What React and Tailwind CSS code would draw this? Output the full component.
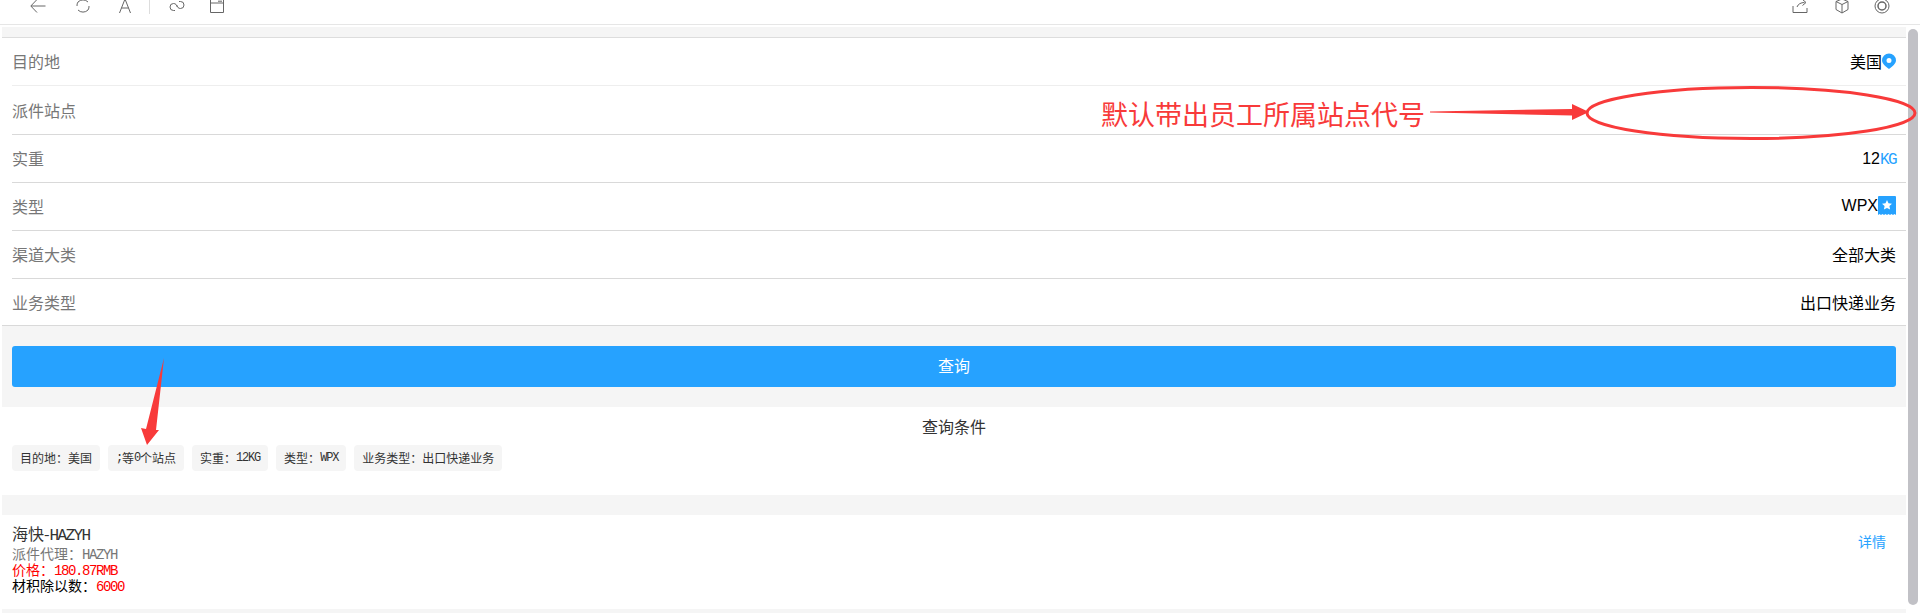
const CJK = 'font-["Noto_Sans_CJK_SC","Liberation_Sans",sans-serif]'

function Mono({ children }) {
  return <span className='font-["Liberation_Mono",monospace] tracking-[-0.1em] leading-none'>{children}</span>
}

function Arial({ children }) {
  return <span className='font-["Liberation_Sans",sans-serif]'>{children}</span>
}

function ToolIcon({ d, className = '' }) {
  return (
    <svg viewBox="0 0 16 16" fill="none" stroke="#666" strokeWidth="1" className={`w-4 h-4 ${className}`}>
      <path d={d} />
    </svg>
  )
}

function PinIcon() {
  return (
    <svg viewBox="0 0 14 16" className="w-[14px] h-4">
      <path fillRule="evenodd" fill="#26a2ff" d="M7 0.500a7 7 0 0 1 7 7c0 3-3.500 6-7 8.500-3.500-2.500-7-5.500-7-8.500a7 7 0 0 1 7-7zM7 5a2.500 2.500 0 1 0 0 5 2.500 2.500 0 0 0 0-5z" />
    </svg>
  )
}

function StarTag() {
  return (
    <svg viewBox="0 0 18 20" className="w-[18px] h-5">
      <path fill="#26a2ff" d="M1 0h16a1 1 0 0 1 1 1v18l-1.500-1-1.500 1-1.500-1-1.500 1-1.500-1-1.500 1-1.500-1-1.500 1-1.500-1-1.500 1-1.500-1-1.500 1V1a1 1 0 0 1 1-1z" />
      <path fill="#fff" d="M9 4l1.500 3.300 3.500 0.400-2.600 2.400 0.700 3.500L9 11.900l-3.100 1.700 0.700-3.500L4 7.700l3.500-0.400z" />
    </svg>
  )
}

function Row({ label, light, tall, last, children }) {
  return (
    <div className={`${tall ? 'h-[49px]' : last ? 'h-[47px] pl-[10px]' : 'h-12 ml-[10px]'} flex items-center justify-between pr-[10px] pb-px border-b ${light ? 'border-[#eeeeee]' : 'border-[#d9d9d9]'} ${tall ? 'ml-[10px]' : ''}`}>
      <span className="text-base text-[#777]">{label}</span>
      <span className="flex items-center text-base text-black">{children}</span>
    </div>
  )
}

function Chip({ children }) {
  return <span className="h-[26px] px-2 flex items-center rounded-[4px] bg-[#f5f5f5] text-xs text-[#333]">{children}</span>
}

export default function App() {
  return (
    <div className={`relative h-[613px] overflow-hidden bg-white ${CJK}`}>
      {/* browser toolbar, cut off at the top */}
      <div className="h-[25px] border-b border-[#e6e6e6] overflow-hidden flex items-end justify-between pb-[10px]">
        <div className="flex items-center">
          <ToolIcon className="ml-[30px]" d="M15.500 8H1M7 1.500L0.800 8 7 14.500" />
          <ToolIcon className="ml-[29px]" d="M3 4a7 7 0 0 1 10 0M13 12a7 7 0 0 1-10 0M2 8a6 6 0 0 1 1-4M14 8a6 6 0 0 1-1 4" />
          <ToolIcon className="ml-[26px]" d="M2.500 15L8 1l5.500 14M4.500 10h7" />
          <span className="ml-[16px] w-px h-4 bg-[#ddd]" />
          <ToolIcon className="ml-[19px]" d="M6 12.500H4.500a3.500 3.500 0 0 1 0-7c2 0 3.500 1.500 4 3.500M10 3.500h1.500a3.500 3.500 0 0 1 0 7c-2 0-3.500-1.500-4-3.500" />
          <ToolIcon className="ml-[24px]" d="M1.500 1.500h13v13h-13zM1.500 5h13M9 3.200h4" />
        </div>
        <div className="flex items-center pr-[30px]">
          <ToolIcon d="M1 8v6.500h14V10M5 9c1-3 4-4.500 7.500-4.500M10.500 1.500l3.500 3-3.500 3" />
          <ToolIcon className="ml-[26px]" d="M8 1l6 2.500v8L8 15l-6-3.500v-8zM2 3.500L8 6.500l6-3M8 6.500V15" />
          <svg viewBox="0 0 16 16" fill="none" stroke="#666" className="w-4 h-4 ml-[24px]">
            <circle cx="8" cy="8" r="7" />
            <circle cx="8" cy="8" r="4" strokeWidth="1.500" />
          </svg>
        </div>
      </div>

      <div className="flex pl-[2px] pr-[2px]">
        <main className="flex-1 min-w-0 pt-[2px]">
          <div className="h-[11px] bg-[#f5f5f5] border-b border-[#dddddd]" />

          <Row label="目的地" light>美国<PinIcon /></Row>
          <Row label="派件站点" tall />
          <Row label="实重"><span><Arial>12</Arial><span className="text-[#26a2ff]"><Mono>KG</Mono></span></span></Row>
          <Row label="类型"><Arial>WPX</Arial><StarTag /></Row>
          <Row label="渠道大类">全部大类</Row>
          <Row label="业务类型" last>出口快递业务</Row>

          <div className="bg-[#f5f5f5] px-[10px] py-5">
            <button className="w-full h-[41px] pb-[3px] rounded-[3px] bg-[#26a2ff] text-white text-base">查询</button>
          </div>

          <div className="h-[88px] px-[10px] pt-[8px]">
            <p className="text-center text-base leading-[22px] text-[#333]">查询条件</p>
            <div className="flex gap-2 mt-[8px]">
              <Chip>目的地：美国</Chip>
              <Chip><Mono>;</Mono>等<Mono>0</Mono>个站点</Chip>
              <Chip>实重：<Mono>12KG</Mono></Chip>
              <Chip>类型：<Mono>WPX</Mono></Chip>
              <Chip>业务类型：出口快递业务</Chip>
            </div>
          </div>

          <div className="h-5 bg-[#f5f5f5]" />

          <div className="h-[94px] px-[10px] pt-[8px] flex justify-between">
            <div>
              <p className="text-base leading-5 text-[#333]">海快-<Mono>HAZYH</Mono></p>
              <p className="text-sm leading-[15px] mt-[2px] text-[#777]">派件代理：<Mono>HAZYH</Mono></p>
              <p className="text-sm leading-[15px] text-[#ff0000]">价格：<Mono>180.87RMB</Mono></p>
              <p className="text-sm leading-[15px] text-black">材积除以数：<span className="text-[#ff0000]"><Mono>6000</Mono></span></p>
            </div>
            <span className="text-sm leading-5 text-[#26a2ff] mt-[8px] mr-[10px]">详情</span>
          </div>

          <div className="h-1 bg-[#f5f5f5]" />
        </main>

        {/* scrollbar */}
        <div className="w-[10px] h-[576px] mt-[4px] ml-[2px] rounded-full bg-[#c1c1c6]" />
      </div>

      {/* red annotations pasted over the screenshot */}
      <span className="absolute left-[1101px] top-[96px] text-[27px] leading-9 text-[#f83a3a] whitespace-nowrap">默认带出员工所属站点代号</span>
      <svg viewBox="0 0 1920 613" fill="none" className="absolute inset-0 w-[1920px] h-[613px] pointer-events-none">
        <ellipse cx="1751" cy="113" rx="164" ry="25.500" stroke="#f83a3a" strokeWidth="3" />
        <path fill="#f83a3a" d="M1430 111.500L1572 109V104L1589 112L1572 120V115.500L1430 112.500Z" />
        <path fill="#f83a3a" d="M164 358L156 430L159 430L147 445L141 428L146 429Z" />
      </svg>
    </div>
  )
}
